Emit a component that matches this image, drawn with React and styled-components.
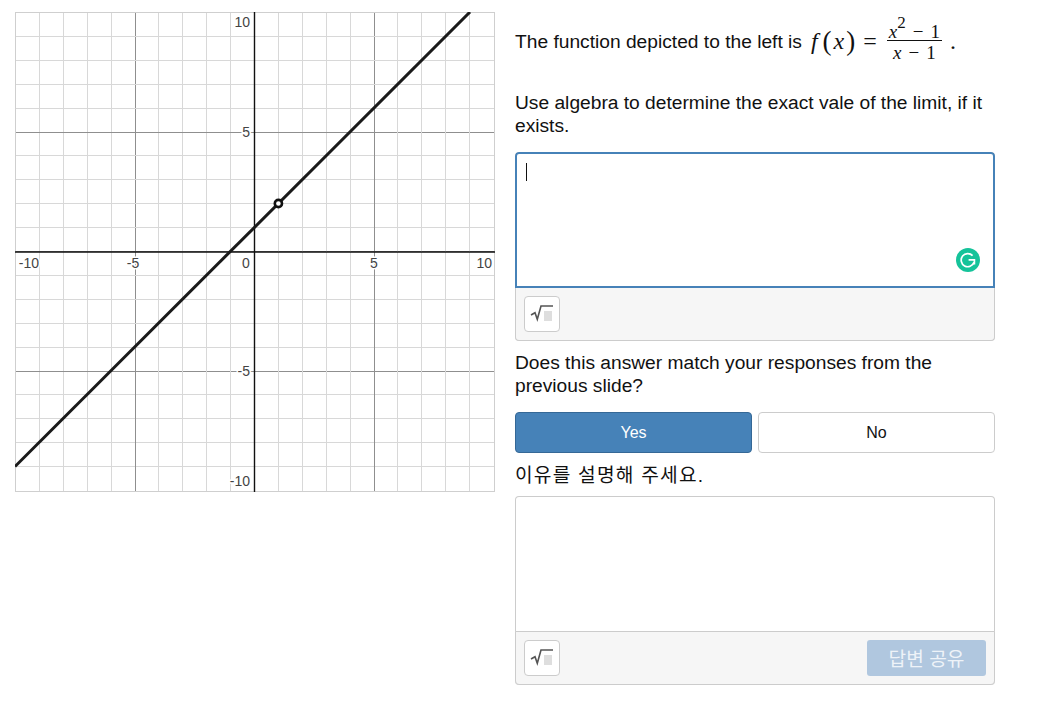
import React from 'react';
import styled, { createGlobalStyle } from 'styled-components';

const GlobalStyle = createGlobalStyle`
  html, body {
    margin: 0;
    padding: 0;
    background: #fff;
  }
  body {
    font-family: "Liberation Sans", Arial, "Noto Sans CJK KR", sans-serif;
    color: #111;
  }
`;

const STEP = 23.9;
const ORIGIN_X = 254.5;
const ORIGIN_Y = 251.5;
// the outer edges come from the frame rect, so only inner ticks here
const ticks = Array.from({ length: 19 }, (_, i) => i - 9);
const toX = (v) => Math.floor(ORIGIN_X + v * STEP) + 0.5;
const toY = (v) => Math.floor(ORIGIN_Y - v * STEP) + 0.5;

const Graph = () => (
  <GraphSvg viewBox="15 12 480 480" width="480" height="480">
    {ticks.map((t) => (
      <g key={t}>
        <line x1={toX(t)} x2={toX(t)} y1="12" y2="492" stroke={t % 5 ? '#d8d8d8' : '#8f8f8f'} />
        <line x1="15" x2="495" y1={toY(t)} y2={toY(t)} stroke={t % 5 ? '#d8d8d8' : '#8f8f8f'} />
      </g>
    ))}
    <rect x="15.5" y="12.5" width="479" height="479" fill="none" stroke="#cfcfcf" />
    <line x1="254.5" x2="254.5" y1="12" y2="492" stroke="#111" strokeWidth="1.4" />
    <line x1="15" x2="495" y1="252" y2="252" stroke="#111" strokeWidth="1.4" />

    <AxisLabel x="39" y="268" textAnchor="end">-10</AxisLabel>
    <AxisLabel x="133" y="268" textAnchor="middle">-5</AxisLabel>
    <AxisLabel x="246" y="268" textAnchor="middle">0</AxisLabel>
    <AxisLabel x="374" y="268" textAnchor="middle">5</AxisLabel>
    <AxisLabel x="492" y="268" textAnchor="end">10</AxisLabel>
    <AxisLabel x="250" y="27" textAnchor="end">10</AxisLabel>
    <AxisLabel x="250" y="137" textAnchor="end">5</AxisLabel>
    <AxisLabel x="250" y="376" textAnchor="end">-5</AxisLabel>
    <AxisLabel x="250" y="486" textAnchor="end">-10</AxisLabel>

    <line x1="15" y1="466.5" x2="470" y2="12" stroke="#1a1a1a" strokeWidth="3" />
    <circle cx="278.4" cy="203.5" r="3.6" fill="#fff" stroke="#111" strokeWidth="2.6" />
  </GraphSvg>
);

const SqrtIcon = () => (
  <svg width="24" height="18" viewBox="0 0 24 18">
    <rect x="14" y="6" width="8" height="10" fill="#dedede" />
    <path d="M1 10 L5 7.7 L7.3 14.3 L11 1 H23" fill="none" stroke="#555" strokeWidth="1.6" />
  </svg>
);

const GrammarlyBadge = () => (
  <Badge viewBox="0 0 24 24" width="24" height="24">
    <circle cx="12" cy="12" r="12" fill="#15c39a" />
    <path
      d="M16.6 7.6 A6.6 6.6 0 1 0 18 14.4 M12.6 11.8 H18.4 V16.4"
      fill="none"
      stroke="#fff"
      strokeWidth="1.7"
    />
  </Badge>
);

export default function App() {
  return (
    <Page>
      <GlobalStyle />
      <Graph />
      <Side>
        <FormulaLine>
          The function depicted to the left is
          <Formula>
            <FName>f</FName>
            <Paren>(</Paren>
            <Var>x</Var>
            <Paren>)</Paren>
            <Equals>=</Equals>
            <Fraction>
              <Numer>
                <Var>x</Var>
                <Sup>2</Sup>
                <Minus>−</Minus>1
              </Numer>
              <Denom>
                <Var>x</Var>
                <Minus>−</Minus>1
              </Denom>
            </Fraction>
            <Dot>.</Dot>
          </Formula>
        </FormulaLine>

        <Prompt>Use algebra to determine the exact vale of the limit, if it exists.</Prompt>

        <AnswerBox>
          <Field $focused $height={136}>
            <Caret />
            <GrammarlyBadge />
          </Field>
          <Footer>
            <MathButton type="button"><SqrtIcon /></MathButton>
          </Footer>
        </AnswerBox>

        <Question>Does this answer match your responses from the previous slide?</Question>

        <Choices>
          <Choice type="button" $active>Yes</Choice>
          <Choice type="button">No</Choice>
        </Choices>

        <Explain>이유를 설명해 주세요.</Explain>

        <AnswerBox>
          <Field $height={135} />
          <Footer $ruled>
            <MathButton type="button"><SqrtIcon /></MathButton>
            <ShareButton type="button">답변 공유</ShareButton>
          </Footer>
        </AnswerBox>
      </Side>
    </Page>
  );
}

const Page = styled.div`
  display: flex;
  align-items: flex-start;
  gap: 20px;
  padding: 12px 0 0 15px;
`;

const GraphSvg = styled.svg`
  display: block;
  flex: none;
`;

const AxisLabel = styled.text`
  font-family: "Liberation Sans", Arial, sans-serif;
  font-size: 14px;
  fill: #444;
  stroke: #fff;
  stroke-width: 3px;
  paint-order: stroke;
`;

const Side = styled.div`
  width: 480px;
  flex: none;
  font-size: 19.2px;
  line-height: 23px;
`;

const FormulaLine = styled.div`
  display: flex;
  align-items: center;
  height: 58px;
  white-space: nowrap;
`;

const Formula = styled.span`
  display: inline-flex;
  align-items: center;
  margin-left: 9px;
  font-family: "Liberation Serif", "Times New Roman", serif;
  font-size: 24px;
  color: #111;
`;

const Var = styled.i`
  font-style: italic;
`;

const FName = styled(Var)`
  margin-right: 3px;
`;

const Paren = styled.span`
  font-size: 27px;
  margin: 0 2px;
`;

const Equals = styled.span`
  margin: 0 10px 0 6px;
`;

const Fraction = styled.span`
  display: inline-flex;
  flex-direction: column;
  align-items: center;
  font-size: 19px;
  line-height: 21px;
`;

const Numer = styled.span`
  box-sizing: border-box;
  height: 22px;
  padding: 4px 2px 0;
  line-height: 18px;
  border-bottom: 1px solid #111;
  white-space: pre;
`;

const Denom = styled.span`
  padding-top: 1px;
  white-space: pre;
`;

const Sup = styled.sup`
  font-size: 17px;
  line-height: 0;
  vertical-align: 10px;
`;

const Minus = styled.span`
  margin: 0 7px;
`;

const Dot = styled.span`
  margin-left: 8px;
`;

const Prompt = styled.p`
  margin: 21px 0 15px;
`;

const AnswerBox = styled.div`
  border-radius: 4px;
  overflow: hidden;
  box-shadow: inset 0 0 0 1px #ccc;
`;

const Field = styled.div`
  position: relative;
  box-sizing: border-box;
  height: ${(p) => p.$height}px;
  padding: 9px 9px;
  background: ${(p) => (p.$focused ? '#fff' : 'transparent')};
  border: ${(p) => (p.$focused ? '2px solid #4682b8' : 'none')};
  border-radius: ${(p) => (p.$focused ? '4px 4px 0 0' : '0')};
`;

const Caret = styled.div`
  width: 1px;
  height: 18px;
  background: #111;
`;

const Badge = styled.svg`
  position: absolute;
  right: 13px;
  bottom: 14px;
`;

const Footer = styled.div`
  display: flex;
  align-items: center;
  justify-content: space-between;
  box-sizing: border-box;
  height: ${(p) => (p.$ruled ? 54 : 53)}px;
  padding: 0 8px 0 9px;
  background: #f6f6f6;
  border: 1px solid #ccc;
  border-top: ${(p) => (p.$ruled ? '1px solid #ccc' : 'none')};
  border-radius: 0 0 4px 4px;
`;

const MathButton = styled.button`
  display: flex;
  align-items: center;
  justify-content: center;
  box-sizing: border-box;
  width: 36px;
  height: 36px;
  margin-left: -1px;
  padding: 0;
  background: #fff;
  border: 1px solid #ccc;
  border-radius: 4px;
`;

const Question = styled.p`
  margin: 10px 0 15px;
`;

const Choices = styled.div`
  display: grid;
  grid-template-columns: 237px 237px;
  gap: 6px;
`;

const Choice = styled.button`
  height: 41px;
  padding: 0;
  font-family: inherit;
  font-size: 16px;
  color: ${(p) => (p.$active ? '#fff' : '#111')};
  background: ${(p) => (p.$active ? '#4682b8' : '#fff')};
  border: 1px solid ${(p) => (p.$active ? '#356896' : '#ccc')};
  border-radius: 4px;
`;

const Explain = styled.p`
  margin: 12px 0 9px;
  height: 22px;
  line-height: 22px;
  letter-spacing: 1.2px;
  font-family: "Liberation Sans", "Noto Sans CJK KR", sans-serif;
`;

const ShareButton = styled.button`
  width: 119px;
  height: 36px;
  padding: 0;
  font-family: "Liberation Sans", "Noto Sans CJK KR", sans-serif;
  font-size: 19.2px;
  color: #eef3f8;
  background: #b0c7df;
  border: none;
  border-radius: 3px;
`;
